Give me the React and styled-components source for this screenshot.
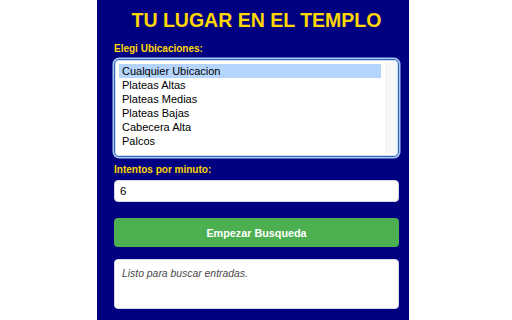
import React from 'react'
import styled, { createGlobalStyle } from 'styled-components'

const Global = createGlobalStyle`
html, body {
  margin: 0;
  padding: 0;
  background: #ffffff;
}
body {
  font-family: "Liberation Sans", Arial, sans-serif;
}
`

const Panel = styled.div`
box-sizing: border-box;
margin-left: 97px;
width: 312px;
min-height: 100vh;
padding: 8px 10px 0 17px;
background: #000080;
display: flex;
flex-direction: column;
`
const Title = styled.h1`
margin: 0;
font-size: 19.5px;
line-height: 24px;
font-weight: bold;
text-align: center;
color: #ffd700;
`
const Label = styled.label`
display: block;
margin-top: ${p => p.$top}px;
margin-bottom: 4px;
font-size: 10px;
line-height: 12px;
font-weight: bold;
color: #ffd700;
`
const ListBox = styled.div`
box-sizing: border-box;
height: 98px;
display: flex;
background: #ffffff;
border: 1px solid #3567b8;
border-radius: 5px;
box-shadow: 0 0 0 1.5px #a9c7f0, inset 0 0 0 1px #c9dcf6;
overflow: hidden;
`
const Options = styled.ul`
flex: 1;
list-style: none;
margin: 0;
padding: 4px 5px 0 4px;
`
const Option = styled.li`
height: 14px;
line-height: 14px;
padding-left: 3px;
font-size: 11px;
color: #000000;
background: ${p => (p.$selected ? '#b5d4fb' : 'transparent')};
`
const Track = styled.div`
width: 10px;
margin: 2px 1px 2px 0;
background: #f8f8f8;
border-left: 1px solid #ececec;
`
const Input = styled.input`
box-sizing: border-box;
height: 22px;
width: 100%;
padding: 0 5px;
border: 1px solid #d6d6e6;
border-radius: 4px;
font-family: inherit;
font-size: 11.5px;
color: #000000;
background: #ffffff;
outline: none;
`
const Button = styled.button`
box-sizing: border-box;
margin-top: 16px;
height: 29px;
width: 100%;
border: none;
border-radius: 4px;
background: #4caf50;
color: #ffffff;
font-family: inherit;
font-size: 10.8px;
font-weight: bold;
cursor: pointer;
`
const Output = styled.div`
box-sizing: border-box;
margin-top: 12px;
height: 50px;
padding: 7px 7px;
background: #ffffff;
border: 1px solid #d9d9e6;
border-radius: 4px;
font-size: 10.4px;
line-height: 13px;
font-style: italic;
color: #4a4a4a;
`

const places = [
  'Cualquier Ubicacion',
  'Plateas Altas',
  'Plateas Medias',
  'Plateas Bajas',
  'Cabecera Alta',
  'Palcos',
]

const App = () => {
  return (
    <>
      <Global />
      <Panel>
        <Title>TU LUGAR EN EL TEMPLO</Title>
        <Label $top={11}>Elegi Ubicaciones:</Label>
        <ListBox>
          <Options>
            {places.map((p, i) => (
              <Option key={p} $selected={i === 0}>{p}</Option>
            ))}
          </Options>
          <Track />
        </ListBox>
        <Label $top={7}>Intentos por minuto:</Label>
        <Input defaultValue="6" />
        <Button>Empezar Busqueda</Button>
        <Output>Listo para buscar entradas.</Output>
      </Panel>
    </>
  )
}

export default App
